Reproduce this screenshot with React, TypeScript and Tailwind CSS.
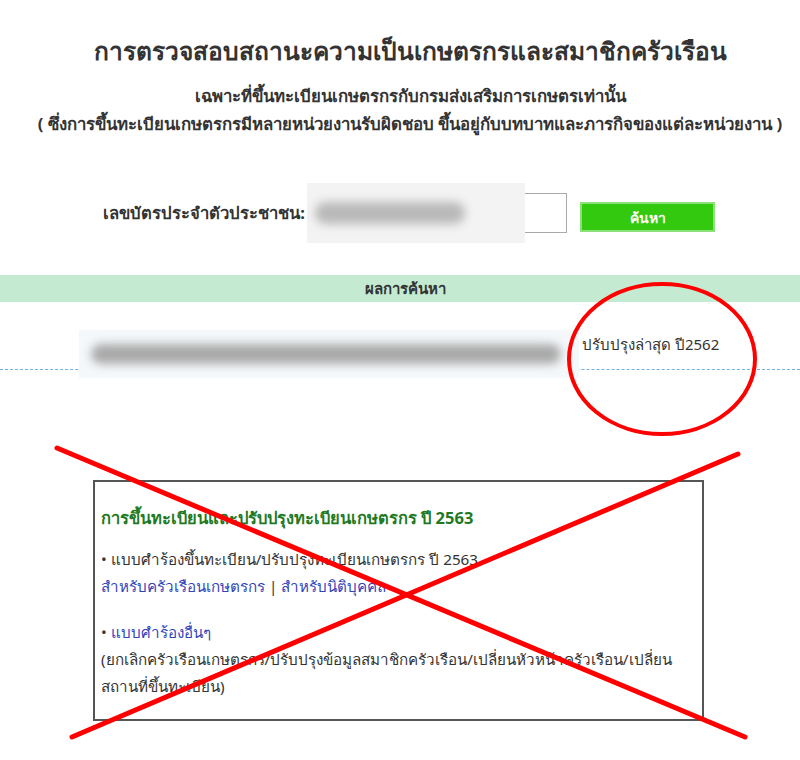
import React from "react";

export default function App() {
  return (
    <div
      className="relative w-[800px] h-[760px] bg-white overflow-hidden text-[#333]"
      style={{ fontFamily: '"Noto Sans", "DejaVu Sans", sans-serif' }}
    >
      <div className="flex flex-col items-center pt-[32px] pl-[20px]">
        <h1 className="text-[24.5px] font-bold leading-[38px] text-[#333] whitespace-nowrap">
          การตรวจสอบสถานะความเป็นเกษตรกรและสมาชิกครัวเรือน
        </h1>
        <div className="mt-[12px] text-[16.8px] font-bold leading-[28px] text-center text-[#333] whitespace-nowrap">
          <div>เฉพาะที่ขึ้นทะเบียนเกษตรกรกับกรมส่งเสริมการเกษตรเท่านั้น</div>
          <div>( ซึ่งการขึ้นทะเบียนเกษตรกรมีหลายหน่วยงานรับผิดชอบ ขึ้นอยู่กับบทบาทและภารกิจของแต่ละหน่วยงาน )</div>
        </div>
      </div>

      <div className="flex items-center mt-[45px] h-[60px]">
        <div className="w-[307px] text-right pr-[2px] text-[16.6px] font-bold whitespace-nowrap">เลขบัตรประจำตัวประชาชน:</div>
        <div className="relative flex items-center h-[60px]">
          <div className="w-[218px] h-[60px] bg-[#f3f3f3] flex items-center pl-[8px]">
            <div className="w-[150px] h-[22px] rounded-full bg-[#b9b9b9] blur-[5px]" />
          </div>
          <div className="w-[42px] h-[40px] border border-l-0 border-[#aaa] bg-white" />
        </div>
        <button className="ml-[13px] mt-[8px] w-[135px] h-[30px] bg-[#33c90f] border-2 border-[#8be07a] text-white text-[14px] font-bold">
          ค้นหา
        </button>
      </div>

      <div className="mt-[32px] h-[27px] bg-[#c4ead1] flex items-center justify-center pl-[10px] text-[15px] font-bold text-[#333]">
        ผลการค้นหา
      </div>

      <div className="relative mt-[28px] h-[48px]">
        <div className="absolute left-0 right-0 top-[39px] border-t border-dashed border-[#6fb1e0]" />
        <div className="relative flex items-start">
          <div className="ml-[79px] w-[500px] h-[48px] bg-[#f5f8fb] flex items-center pl-[12px]">
            <div className="w-[470px] h-[20px] rounded-full bg-[#a9a9a9] blur-[5px]" />
          </div>
          <div className="ml-[3px] mt-[4px] text-[15px] leading-[20px] text-[#333] whitespace-nowrap">ปรับปรุงล่าสุด ปี2562</div>
        </div>
      </div>

      <div className="ml-[93px] mt-[102px] w-[611px] h-[241px] border-2 border-[#555] px-[6px] pt-[22px] text-[15.2px] leading-[27px]">
        <div className="font-bold text-[#1f7a1f] text-[16.5px]">การขึ้นทะเบียนและปรับปรุงทะเบียนเกษตรกร ปี 2563</div>
        <div className="mt-[15px]">• แบบศำร้องขึ้นทะเบียน/ปรับปรุงทะเบียนเกษตรกร ปี 2563</div>
        <div className="text-[#3344bb]">
          สำหรับครัวเรือนเกษตรกร <span className="text-[#333]">|</span> สำหรับนิติบุคคล
        </div>
        <div className="mt-[19px]">
          • <span className="text-[#3344bb]">แบบศำร้องอื่นๆ</span>
        </div>
        <div>(ยกเลิกครัวเรือนเกษตรกร/ปรับปรุงข้อมูลสมาชิกครัวเรือน/เปลี่ยนหัวหน้าครัวเรือน/เปลี่ยน สถานที่ขึ้นทะเบียน)</div>
      </div>

      <svg className="absolute inset-0 pointer-events-none" width="800" height="760" viewBox="0 0 800 760">
        <ellipse cx="662" cy="359" rx="93" ry="75" fill="none" stroke="#ff0000" strokeWidth="4" />
        <line x1="57" y1="448" x2="745" y2="737" stroke="#ff0000" strokeWidth="5" strokeLinecap="round" />
        <line x1="738" y1="454" x2="72" y2="737" stroke="#ff0000" strokeWidth="5" strokeLinecap="round" />
      </svg>
    </div>
  );
}
